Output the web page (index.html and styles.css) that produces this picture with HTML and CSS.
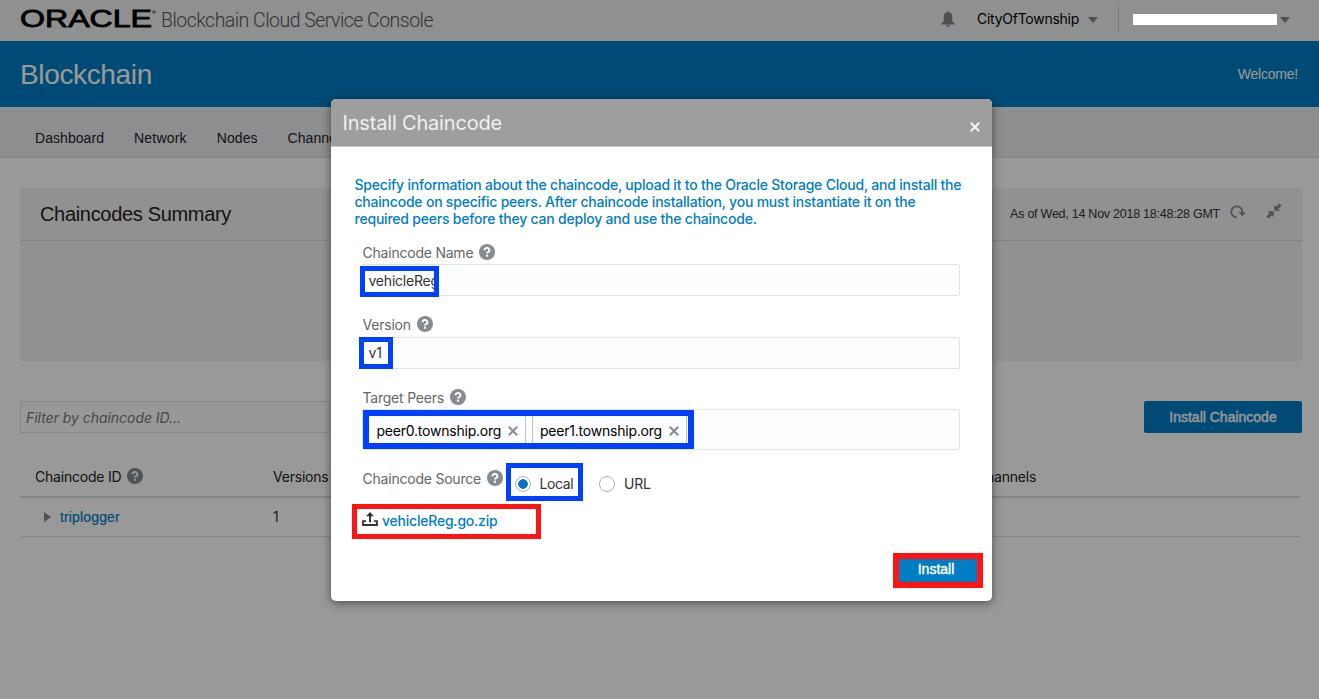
FILE: index.html
```html
<!DOCTYPE html>
<html lang="en">
<head>
<meta charset="utf-8">
<title>Blockchain Cloud Service Console</title>
<link rel="stylesheet" href="styles.css">
</head>
<body>
<svg class="defs" width="0" height="0">
  <symbol id="help" viewBox="0 0 16 16"><circle cx="8" cy="8" r="8" fill="#868b91"/><path d="M5.600 6.200a2.400 2.200 0 1 1 3.600 1.800c-.8.5-1.200.8-1.200 1.600" fill="none" stroke="#fff" stroke-width="1.900"/><rect x="7" y="10.700" width="2" height="2" fill="#fff"/></symbol>
  <symbol id="cross" viewBox="0 0 10 10"><path d="M.8.8l8.400 8.400M9.200.8L.8 9.200" stroke="currentColor" stroke-width="2"/></symbol>
</svg>
<div class="page">
  <header class="topbar">
    <svg class="logo" width="137" height="22" viewBox="0 0 137 22"><text class="logo-text" x="0" y="19.400" textLength="132" lengthAdjust="spacingAndGlyphs">ORACLE</text><circle cx="134" cy="4" r="1.200" fill="none" stroke="#333" stroke-width=".8"/></svg>
    <span class="product">Blockchain Cloud Service Console</span>
    <div class="account">
      <svg class="bell" width="14" height="16" viewBox="0 0 14 16"><path d="M7 .4C7.900.4 8.300.9 8.300 1.600 10.400 2.200 11.300 3.600 11.300 6V9.200C11.300 10.800 12.100 11.500 13.700 12.500V13.500H.3V12.500C1.900 11.500 2.700 10.800 2.700 9.200V6C2.700 3.600 3.600 2.200 5.700 1.600 5.700.9 6.100.4 7 .4zM5 14H9C9 15 8.100 15.600 7 15.600S5 15 5 14z" fill="#82878c"/></svg>
      <span class="tenant">CityOfTownship</span>
      <i class="caret"></i>
      <i class="divider"></i>
      <span class="user-gap"></span>
      <i class="caret"></i>
    </div>
  </header>
  <div class="banner"><h1 class="banner-title">Blockchain</h1><span class="welcome">Welcome!</span></div>
  <nav class="nav"><a>Dashboard</a><a class="wide">Network</a><a>Nodes</a><a>Channels</a></nav>
  <main class="content">
    <section class="summary">
      <div class="summary-head">
        <h2 class="summary-title">Chaincodes Summary</h2>
        <span class="asof">As of Wed, 14 Nov 2018 18:48:28 GMT</span>
        <svg class="refresh" width="16" height="14" viewBox="0 0 16 14"><path d="M7 12.300A5.500 5.500 0 1 1 12.300 6.800V8" fill="none" stroke="#82878c" stroke-width="1.800"/><path d="M8.500 7.300H15.900L12.200 11.200z" fill="#82878c"/></svg>
        <svg class="collapse" width="16" height="16" viewBox="0 0 16 16"><path d="M8.300 7.700V1.700L10.300 3.700 13.500.5 15.500 2.500 12.300 5.700 14.300 7.700zM7.700 8.300V14.300L5.700 12.300 2.500 15.500.5 13.500 3.700 10.300 1.700 8.300z" fill="#82878c"/></svg>
      </div>
    </section>
    <div class="toolbar"><div class="filter">Filter by chaincode ID...</div><button class="btn big">Install Chaincode</button></div>
    <div class="table">
      <div class="tr th"><span class="c1">Chaincode ID<svg class="q" width="16" height="16"><use href="#help"/></svg></span><span class="c2">Versions</span><span>Channels</span></div>
      <div class="tr td"><span class="c1"><i class="expand"></i><a class="link name">triplogger</a></span><span class="c2">1</span></div>
    </div>
  </main>
</div>
<div class="overlay"></div>
<div class="redact"></div>
<div class="modal">
  <div class="modal-head"><h2 class="modal-title">Install Chaincode</h2><svg class="close" width="10" height="10"><use href="#cross"/></svg></div>
  <div class="modal-body">
    <p class="desc">Specify information about the chaincode, upload it to the Oracle Storage Cloud, and install the<br>chaincode on specific peers. After chaincode installation, you must instantiate it on the<br>required peers before they can deploy and use the chaincode.</p>
    <div class="label first">Chaincode Name<svg class="q" width="16" height="16"><use href="#help"/></svg></div>
    <div class="input"><div class="mark m-name">vehicleReg</div></div>
    <div class="label second">Version<svg class="q" width="16" height="16"><use href="#help"/></svg></div>
    <div class="input"><div class="mark m-version">v1</div></div>
    <div class="label">Target Peers<svg class="q" width="16" height="16"><use href="#help"/></svg></div>
    <div class="input tall"><div class="mark m-peers"><span class="chip">peer0.township.org<svg width="10" height="10"><use href="#cross"/></svg></span><span class="chip">peer1.township.org<svg width="10" height="10"><use href="#cross"/></svg></span></div></div>
    <div class="source"><span class="source-label">Chaincode Source<svg class="q" width="16" height="16"><use href="#help"/></svg></span><span class="m-local"><i class="radio on"></i>Local</span><span class="url"><i class="radio"></i>URL</span></div>
    <div class="file"><svg width="16" height="14" viewBox="0 0 16 14"><path d="M8 10.200V2" stroke="#333" stroke-width="2" fill="none"/><path d="M8 0L12 4.300H4z" fill="#333"/><path d="M4 9.100H1V13H15V9.100H12" fill="none" stroke="#333" stroke-width="1.800"/></svg><a class="link file-name">vehicleReg.go.zip</a></div>
    <div class="actions"><button class="btn install">Install</button></div>
  </div>
</div>
</body>
</html>
```
FILE: styles.css
```css
*{box-sizing:border-box}
body{margin:0;width:1319px;height:699px;overflow:hidden;background:#fff;color:#333;font:14px/18px Inter,"Liberation Sans",sans-serif;letter-spacing:-.22px}
h1,h2,p{margin:0;font-weight:400}
svg,i{flex:none;display:block}
span,a,h1,h2,p{white-space:nowrap}
.defs{position:absolute}
.page{height:699px;overflow:hidden}
.topbar{height:41px;background:#f0f0f0;display:flex;align-items:center;padding-left:20px}
.logo{margin-top:-3px;overflow:visible}
.logo-text{font:400 23px "Liberation Sans",sans-serif;letter-spacing:0;fill:#000;stroke:#000;stroke-width:.8px}
.product{font:300 19.500px/24px Roboto,sans-serif;letter-spacing:-.52px;color:#555;margin-left:4px}
.account{display:flex;align-items:center;margin-left:auto;padding-right:29px;height:38px}
.bell{margin-top:-3px}
.tenant{color:#000;margin:-3px 9px 0 22px;letter-spacing:-.26px}
.caret{border:5px solid transparent;border-top:6px solid #82878c;border-bottom:0;margin-top:-2px}
.divider{width:1px;height:26px;background:#ccc;margin:-4px 0 0 20px}
.user-gap{width:161px}
.banner{height:66px;background:#007dc3;display:flex;align-items:center;justify-content:space-between;padding:0 21px 0 20px;color:#fff;font-family:"Liberation Sans",sans-serif}
.banner-title{font-size:28px;line-height:32px;letter-spacing:-.35px;padding-top:1px}
.nav{height:51px;background:#ebedf0;border-bottom:1px solid #d6dadf;display:flex;gap:30px;padding:22px 0 0 35px;font-family:"Liberation Sans",sans-serif;letter-spacing:.06px;color:#222}
.wide{letter-spacing:.2px}
.content{padding:30px 17px 0 20px}
.summary{height:173px;background:#f2f2f2}
.summary-head{height:53px;border-bottom:1px solid #d6dadf;display:flex;align-items:center;padding:0 20px}
.summary-title{font:20px/24px "Liberation Sans",sans-serif;letter-spacing:-.32px;color:#222}
.asof{margin-left:auto;font:12.500px/18px "Liberation Sans",sans-serif;letter-spacing:-.25px}
.refresh{margin:-4px 0 0 10px}
.collapse{margin:-6px 0 0 20px}
.toolbar{margin-top:40px;display:flex;justify-content:space-between}
.filter{width:700px;height:32px;border:1px solid #dfe4e7;background:#fcfdfe;padding:7px 5px;font-style:italic;letter-spacing:-.04px;color:#777}
.btn{border:0;padding:0;background:#007dc3;color:#fff;border-radius:2px;font:14px/18px "Liberation Sans",sans-serif;letter-spacing:0;-webkit-text-stroke:.4px #fff}
.big{width:158px;height:32px}
.table{margin:22px 2px 0 1px}
.tr{display:flex;align-items:center;padding-left:14px}
.th{height:43px;padding-top:3px;border-bottom:2px solid #d6dfe6;color:#222}
.td{height:39px;border-bottom:1px solid #d6dfe6}
.c1{width:238px;display:flex;align-items:center}
.c2{width:703px}
.q{margin:-2px 0 0 6px}
.expand{border:5px solid transparent;border-left:7px solid #82878c;border-right:0;margin:0 9px}
.link{color:#007dc3}
.name{font:14px/18px "Liberation Sans",sans-serif;letter-spacing:.15px;-webkit-text-stroke:.2px}
.overlay{position:absolute;inset:0;background:rgba(0,0,0,.4)}
.redact{position:absolute;left:1133px;top:14px;width:144px;height:11px;background:#fff}
.modal{position:absolute;left:331px;top:99px;width:661px;height:502px;border-radius:5px;background:#fff;box-shadow:0 2px 10px rgba(0,0,0,.5);overflow:hidden}
.modal-head{height:48px;background:#9e9e9e;border-bottom:1px solid #c5cbd1;display:flex;align-items:center;justify-content:space-between;padding:0 12px 0 11.500px}
.modal-title{font-size:20px;line-height:24px;letter-spacing:-.18px;color:#f0f0f0}
.close{margin:9px 0 0;color:#f6f6f6}
.modal-body{padding:29px 32px 0 31px}
.desc{margin-left:-7.500px;line-height:17px;color:#007dc3;font-weight:450;letter-spacing:-.215px}
.label{margin:19px 0 1px;height:20px;display:flex;align-items:center;padding-left:.5px;color:#666}
.first{margin-top:16px}
.second{margin-bottom:2px}
.input{position:relative;height:32px;border:1px solid #dfe4e7;border-radius:2px;background:#fcfdfe}
.tall{height:41px}
.mark{position:absolute;border:5px solid #0040ff;overflow:hidden;color:#333}
.m-name{left:-3.500px;top:1px;width:79.500px;height:31px;padding:1px 0 0 4px;background:#fff}
.m-version{left:-4px;top:-1px;width:34px;height:32px;padding:2px 0 0 4.500px;background:#fff}
.m-peers{left:0;top:0;width:331px;height:39px;border-width:6px;display:flex;color:#000}
.chip{width:157px;display:flex;align-items:center;justify-content:space-between;padding:2px 7px 0 7.500px;border-right:1px solid #b9c6d3;color:#000}
.chip+.chip{width:155px;margin-left:6px;padding-left:7px;border-left:1px solid #b9c6d3}
.chip svg{color:#868b91}
.source{display:flex;margin-top:13px;height:38px}
.source-label{display:flex;align-items:center;width:144px;height:32px;padding-left:.5px;color:#666}
.m-local{display:flex;align-items:center;gap:8.500px;width:77px;padding:4px 0 0 4px;border:5px solid #0040ff;letter-spacing:-.4px}
.url{display:flex;align-items:center;gap:9px;padding:4px 0 0 16px}
.radio{width:16px;height:16px;border:1px solid #aab4bf;border-radius:50%}
.on{background:radial-gradient(circle,#0572ce 4.500px,#fff 5px)}
.file{display:flex;align-items:center;gap:4px;width:189px;height:35px;margin:3px 0 0 -10px;padding-left:5px;border:5px solid #ff1414}
.file svg{margin-top:-6px}
.file-name{margin-top:-2px;font-weight:450}
.actions{display:flex;justify-content:flex-end;margin:14px -23px 0 0}
.install{width:90px;height:35px;border:6px solid #ff1414;border-radius:0;padding:0 4px 3px 0}
```
